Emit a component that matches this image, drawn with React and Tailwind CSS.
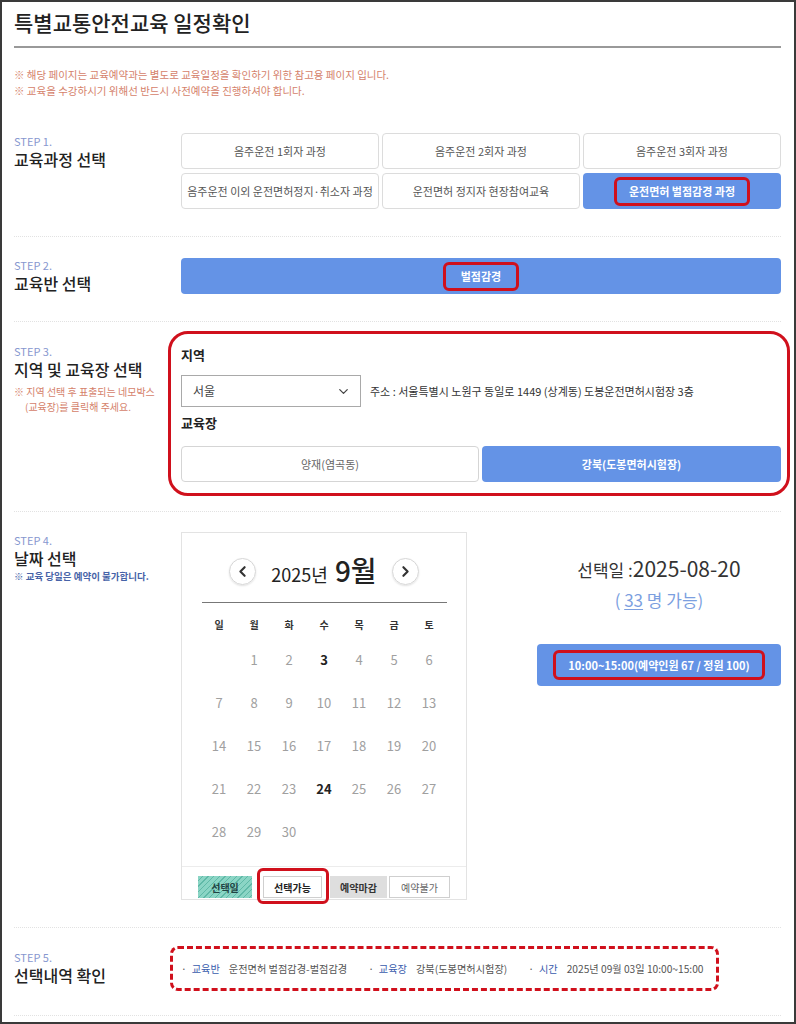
import { ChevronLeft, ChevronRight, ChevronDown } from "lucide-react";

const courses = [
  "음주운전 1회자 과정",
  "음주운전 2회자 과정",
  "음주운전 3회자 과정",
  "음주운전 이외 운전면허정지·취소자 과정",
  "운전면허 정지자 현장참여교육",
];

const weekdays = ["일", "월", "화", "수", "목", "금", "토"];

const days = [
  null, 1, 2, 3, 4, 5, 6,
  7, 8, 9, 10, 11, 12, 13,
  14, 15, 16, 17, 18, 19, 20,
  21, 22, 23, 24, 25, 26, 27,
  28, 29, 30, null, null, null, null,
];

const StepLabel = ({ step, title, children, top }) => (
  <div className={`w-[167px] shrink-0 ${top}`}>
    <p className="text-[11px] leading-[14px] text-[#8797cf]">{step}</p>
    <h2 className="text-[16px] leading-[22px] font-medium text-[#222]">{title}</h2>
    {children}
  </div>
);

const App = () => {
  return (
    <div className="w-[796px] h-[1024px] border-2 border-[#3a3a3a] bg-white overflow-hidden font-['Noto_Sans_CJK_KR','Noto_Sans',sans-serif]">
      <div className="pl-[12px] pr-[13px]">
        {/* header */}
        <div className="pt-[6px] pb-[10px] border-b-2 border-[#999]">
          <h1 className="text-[21px] leading-[28px] font-medium text-[#222]">
            특별교통안전교육 일정확인
          </h1>
        </div>
        <div className="mt-[19px] text-[10.5px] leading-[16px] text-[#d5826b]">
          <p>※ 해당 페이지는 교육예약과는 별도로 교육일정을 확인하기 위한 참고용 페이지 입니다.</p>
          <p>※ 교육을 수강하시기 위해선 반드시 사전예약을 진행하셔야 합니다.</p>
        </div>

        {/* step 1 */}
        <div className="flex pt-[34px] pb-[27px] border-b border-dotted border-[#e2e2e2]">
          <StepLabel step="STEP 1." title="교육과정 선택" top="pt-[1px]" />
          <div className="grid grid-cols-3 gap-x-[3px] gap-y-[4px] w-[600px] shrink-0">
            {courses.map((c) => (
              <div
                key={c}
                className="h-[36px] flex items-center justify-center rounded-[4px] border border-[#dcdcdc] text-[11px] text-[#555]"
              >
                {c}
              </div>
            ))}
            <div className="h-[36px] flex items-center justify-center rounded-[4px] bg-[#6493e6]">
              <span className="border-[3px] border-[#d0101c] rounded-[6px] px-[12px] py-[3px] text-[11px] leading-[17px] font-bold text-white">
                운전면허 벌점감경 과정
              </span>
            </div>
          </div>
        </div>

        {/* step 2 */}
        <div className="flex pt-[21px] pb-[27px] border-b border-dotted border-[#e2e2e2]">
          <StepLabel step="STEP 2." title="교육반 선택" top="pt-[0px]" />
          <div className="w-[600px] shrink-0 h-[36px] flex items-center justify-center rounded-[4px] bg-[#6493e6]">
            <span className="border-[3px] border-[#d0101c] rounded-[6px] px-[15px] py-[3px] text-[11px] leading-[17px] font-bold text-white">
              벌점감경
            </span>
          </div>
        </div>

        {/* step 3 */}
        <div className="flex pt-[9px] pb-[15px] border-b border-dotted border-[#e2e2e2]">
          <StepLabel step="STEP 3." title="지역 및 교육장 선택" top="pt-[13px]">
            <p className="mt-[4px] text-[10px] leading-[15px] text-[#d5826b]">
              ※ 지역 선택 후 표출되는 네모박스
            </p>
            <p className="pl-[11px] text-[10px] leading-[15px] text-[#d5826b]">
              (교육장)를 클릭해 주세요.
            </p>
          </StepLabel>
          <div className="ml-[-13px] w-[622px] shrink-0 border-[3px] border-[#d0101c] rounded-[20px] pl-[10px] pr-[6px] pt-[11px] pb-[11px]">
            <p className="text-[13px] leading-[20px] font-bold text-[#222]">지역</p>
            <div className="mt-[10px] flex items-center">
              <div className="w-[180px] h-[32px] border border-[#a9a9a9] flex items-center justify-between pl-[11px] pr-[9px] text-[12px] text-[#444]">
                <span>서울</span>
                <ChevronDown size={15} strokeWidth={2} className="text-[#444]" />
              </div>
              <p className="ml-[9px] text-[11px] text-[#333]">
                주소 : 서울특별시 노원구 동일로 1449 (상계동) 도봉운전면허시험장 3층
              </p>
            </div>
            <p className="mt-[6px] text-[13px] leading-[20px] font-bold text-[#222]">교육장</p>
            <div className="mt-[13px] flex gap-[3px]">
              <div className="w-[298px] h-[36px] flex items-center justify-center rounded-[4px] border border-[#d5d5d5] text-[11px] text-[#666]">
                양재(염곡동)
              </div>
              <div className="flex-1 h-[36px] flex items-center justify-center rounded-[4px] bg-[#6493e6] text-[11px] font-bold text-white">
                강북(도봉면허시험장)
              </div>
            </div>
          </div>
        </div>

        {/* step 4 */}
        <div className="flex pt-[20px] pb-[27px] border-b border-dotted border-[#e2e2e2]">
          <StepLabel step="STEP 4." title="날짜 선택" top="pt-[1px]">
            <p className="text-[9.5px] leading-[14px] font-semibold text-[#4763a8]">
              ※ 교육 당일은 예약이 불가합니다.
            </p>
          </StepLabel>
          <div className="w-[286px] h-[368px] shrink-0 border border-[#e3e3e3] flex flex-col">
            <div className="pt-[22px] flex items-center justify-center">
              <button className="w-[27px] h-[27px] rounded-full border border-[#d6d6d6] shadow-[0_1px_2px_rgba(0,0,0,0.12)] flex items-center justify-center text-[#333]">
                <ChevronLeft size={17} strokeWidth={3} />
              </button>
              <div className="mx-[15px] flex items-baseline text-[#222]">
                <span className="text-[18px]">2025년</span>
                <span className="ml-[7px] text-[28px] leading-[30px] font-medium">9월</span>
              </div>
              <button className="w-[27px] h-[27px] rounded-full border border-[#d6d6d6] shadow-[0_1px_2px_rgba(0,0,0,0.12)] flex items-center justify-center text-[#333]">
                <ChevronRight size={17} strokeWidth={3} />
              </button>
            </div>
            <div className="mx-auto mt-[14px] w-[245px] border-b border-[#777]" />
            <div className="mx-auto mt-[7px] w-[245px] grid grid-cols-7">
              {weekdays.map((w) => (
                <div key={w} className="h-[28px] flex items-center justify-center text-[10px] font-bold text-[#333]">
                  {w}
                </div>
              ))}
              {days.map((d, i) => (
                <div
                  key={i}
                  className={`h-[43px] flex items-center justify-center text-[13px] ${
                    d === 3 || d === 24 ? "font-bold text-[#222]" : "text-[#a0a0a0]"
                  }`}
                >
                  {d}
                </div>
              ))}
            </div>
            <div className="mt-[13px] border-t border-[#ececec] pt-[9px] pl-[16px] flex">
              <div className="w-[54px] h-[22px] flex items-center justify-center text-[10px] font-bold text-[#244] bg-[repeating-linear-gradient(135deg,#8bd5c5_0px,#8bd5c5_3px,#5fb9a7_3px,#5fb9a7_4px)]">
                선택일
              </div>
              <div className="relative ml-[11px] w-[59px] h-[22px] flex items-center justify-center border border-[#cfcfcf] text-[10px] font-bold text-[#222]">
                선택가능
                <span className="absolute left-[-7px] right-[-8px] top-[-9px] bottom-[-7px] border-[3px] border-[#d0101c] rounded-[6px]" />
              </div>
              <div className="ml-[8px] w-[57px] h-[22px] flex items-center justify-center bg-[#dedede] text-[10px] font-bold text-[#333]">
                예약마감
              </div>
              <div className="ml-[2px] w-[61px] h-[22px] flex items-center justify-center border border-[#cfcfcf] text-[10px] text-[#666]">
                예약불가
              </div>
            </div>
          </div>
          <div className="ml-[70px] w-[244px] pt-[22px] flex flex-col items-center">
            <p className="leading-[28px] text-[#333]">
              <span className="text-[17px]">선택일 :</span>
              <span className="text-[21px]">2025-08-20</span>
            </p>
            <p className="mt-[4px] text-[17px] leading-[24px] text-[#7c9fdf]">
              ( <span className="underline underline-offset-2">33</span> 명 가능)
            </p>
            <div className="mt-[32px] w-[244px] h-[42px] rounded-[4px] bg-[#6493e6] flex items-center justify-center">
              <span className="border-[3px] border-[#d0101c] rounded-[6px] px-[12px] py-[4px] text-[11px] leading-[16px] font-bold text-white">
                10:00~15:00(예약인원 67 / 정원 100)
              </span>
            </div>
          </div>
        </div>

        {/* step 5 */}
        <div className="flex pt-[18px] pb-[24px] border-b border-dotted border-[#e2e2e2]">
          <StepLabel step="STEP 5." title="선택내역 확인" top="pt-[4px]" />
          <div className="ml-[-11px] w-[549px] shrink-0 h-[45px] border-[3px] border-dashed border-[#d0101c] rounded-[8px] pl-[8px] flex items-center text-[10.2px]">
            <span className="text-[#555]">·</span>
            <span className="ml-[5px] text-[#3a5cad]">교육반</span>
            <span className="ml-[9px] text-[#555]">운전면허 벌점감경-벌점감경</span>
            <span className="ml-[21px] text-[#555]">·</span>
            <span className="ml-[5px] text-[#3a5cad]">교육장</span>
            <span className="ml-[9px] text-[#555]">강북(도봉면허시험장)</span>
            <span className="ml-[21px] text-[#555]">·</span>
            <span className="ml-[5px] text-[#3a5cad]">시간</span>
            <span className="ml-[9px] text-[#555]">2025년 09월 03일 10:00~15:00</span>
          </div>
        </div>
      </div>
    </div>
  );
};

export default App;
